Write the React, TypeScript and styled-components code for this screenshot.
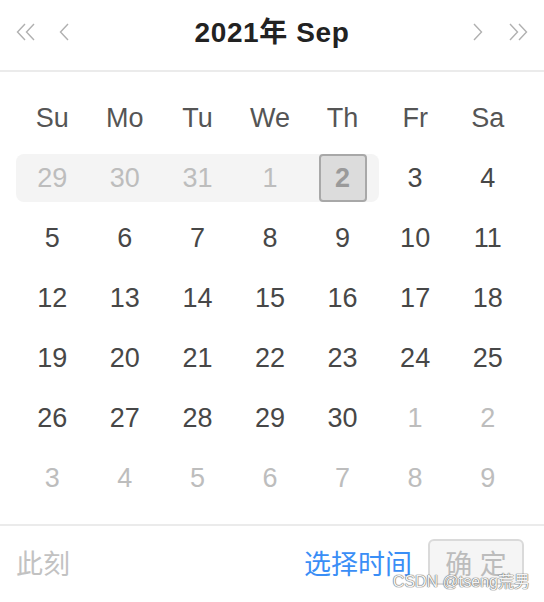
import styled, { createGlobalStyle } from "styled-components";

const GlobalStyle = createGlobalStyle`
  html, body {
    margin: 0;
    padding: 0;
    background: #fff;
  }
  body {
    font-family: "Liberation Sans", "Noto Sans CJK SC", sans-serif;
  }
`;

const weekdays = ["Su", "Mo", "Tu", "We", "Th", "Fr", "Sa"];

type Day = { n: number; out?: boolean };

// 6 rows, Sep 2021 (1st is disabled as well)
const buildDays = (): Day[] => {
  const days: Day[] = [29, 30, 31].map((n) => ({ n, out: true }));
  for (let i = 1; i <= 30; i++) days.push({ n: i, out: i === 1 });
  for (let i = 1; i <= 9; i++) days.push({ n: i, out: true });
  return days;
};

const Chevron = ({ dir, double }: { dir: "left" | "right"; double?: boolean }) => {
  const flip = dir === "right";
  return (
    <svg
      width={double ? 20 : 12}
      height="20"
      viewBox={double ? "0 0 20 20" : "0 0 12 20"}
      fill="none"
      stroke="#b0b0b0"
      strokeWidth="1.4"
      style={flip ? { transform: "scaleX(-1)" } : undefined}
    >
      {double ? (
        <>
          <path d="M9 2 L1.5 10 L9 18" />
          <path d="M18 2 L10.5 10 L18 18" />
        </>
      ) : (
        <path d="M10 2 L2.5 10 L10 18" />
      )}
    </svg>
  );
};

export default function App() {
  const days = buildDays();
  const rows: Day[][] = [];
  for (let i = 0; i < 6; i++) rows.push(days.slice(i * 7, i * 7 + 7));

  return (
    <Panel>
      <GlobalStyle />
      <Header>
        <NavGroup>
          <NavBtn>
            <Chevron dir="left" double />
          </NavBtn>
          <NavBtn>
            <Chevron dir="left" />
          </NavBtn>
        </NavGroup>
        <Title>2021年 Sep</Title>
        <NavGroup>
          <NavBtn>
            <Chevron dir="right" />
          </NavBtn>
          <NavBtn>
            <Chevron dir="right" double />
          </NavBtn>
        </NavGroup>
      </Header>

      <Body>
        <Grid>
          {weekdays.map((w) => (
            <Weekday key={w}>{w}</Weekday>
          ))}
          {rows.map((row, r) =>
            row.map((d, c) => {
              const inRange = r === 0 && c <= 4;
              return (
                <Cell key={`${r}-${c}`}>
                  <RangeBg
                    $on={inRange}
                    $start={inRange && c === 0}
                    $end={inRange && c === 4}
                  >
                    {r === 0 && c === 4 ? (
                      <Selected>{d.n}</Selected>
                    ) : (
                      <DayNum $out={d.out}>{d.n}</DayNum>
                    )}
                  </RangeBg>
                </Cell>
              );
            })
          )}
        </Grid>
      </Body>

      <Footer>
        <NowLink>此刻</NowLink>
        <FooterRight>
          <TimeLink>选择时间</TimeLink>
          <OkButton disabled>确 定</OkButton>
        </FooterRight>
        <Watermark>CSDN @tseng荒男</Watermark>
      </Footer>
    </Panel>
  );
}

const Panel = styled.div`
  width: 544px;
  height: 602px;
  background: #fff;
  display: flex;
  flex-direction: column;
  overflow: hidden;
`;

const Header = styled.div`
  box-sizing: border-box;
  height: 72px;
  padding: 0 16px 6px;
  display: flex;
  align-items: center;
  justify-content: space-between;
  border-bottom: 2px solid #ebebeb;
`;

const NavGroup = styled.div`
  display: flex;
  align-items: center;
  gap: 22px;
  width: 112px;
  &:last-child {
    justify-content: flex-end;
    gap: 24px;
  }
`;

const NavBtn = styled.span`
  display: flex;
  align-items: center;
`;

const Title = styled.div`
  font-size: 28px;
  font-weight: 700;
  color: #222;
  letter-spacing: 0.6px;
  padding-bottom: 4px;
`;

const Body = styled.div`
  padding: 16px 20px 16px 16px;
`;

const Grid = styled.div`
  display: grid;
  grid-template-columns: repeat(7, 1fr);
  grid-auto-rows: 60px;
`;

const Weekday = styled.div`
  display: flex;
  align-items: center;
  justify-content: center;
  font-size: 27px;
  color: #555;
`;

const Cell = styled.div`
  display: flex;
  align-items: center;
`;

const RangeBg = styled.div<{ $on?: boolean; $start?: boolean; $end?: boolean }>`
  flex: 1;
  height: 48px;
  display: flex;
  align-items: center;
  justify-content: center;
  background: ${(p) => (p.$on ? "#f4f4f4" : "transparent")};
  border-radius: ${(p) =>
    p.$start ? "8px 0 0 8px" : p.$end ? "0 8px 8px 0" : "0"};
`;

const DayNum = styled.span<{ $out?: boolean }>`
  font-size: 27px;
  color: ${(p) => (p.$out ? "#bdbdbd" : "#474747")};
`;

const Selected = styled.span`
  box-sizing: border-box;
  width: 48px;
  height: 48px;
  display: flex;
  align-items: center;
  justify-content: center;
  border: 2px solid #a8a8a8;
  border-radius: 4px;
  background: #dcdcdc;
  font-size: 27px;
  font-weight: 700;
  color: #9a9a9a;
`;

const Footer = styled.div`
  position: relative;
  flex: 1;
  border-top: 2px solid #ebebeb;
  padding: 0 20px 4px 16px;
  display: flex;
  align-items: center;
  justify-content: space-between;
`;

const NowLink = styled.span`
  font-size: 27px;
  color: #c2c2c2;
`;

const FooterRight = styled.div`
  display: flex;
  align-items: center;
  gap: 16px;
`;

const TimeLink = styled.span`
  font-size: 27px;
  color: #3a8ef6;
`;

const OkButton = styled.button`
  box-sizing: border-box;
  width: 96px;
  height: 46px;
  border: 2px solid #dadada;
  border-radius: 6px;
  background: #f5f5f5;
  font-family: inherit;
  font-size: 27px;
  color: #bcbcbc;
  padding: 0;
`;

const Watermark = styled.span`
  position: absolute;
  right: 14px;
  bottom: 10px;
  font-size: 16px;
  color: #f4f4f4;
  text-shadow: 0 0 1px #6e6e6e, 0 0 1px #6e6e6e, 0 0 1px #6e6e6e;
`;
